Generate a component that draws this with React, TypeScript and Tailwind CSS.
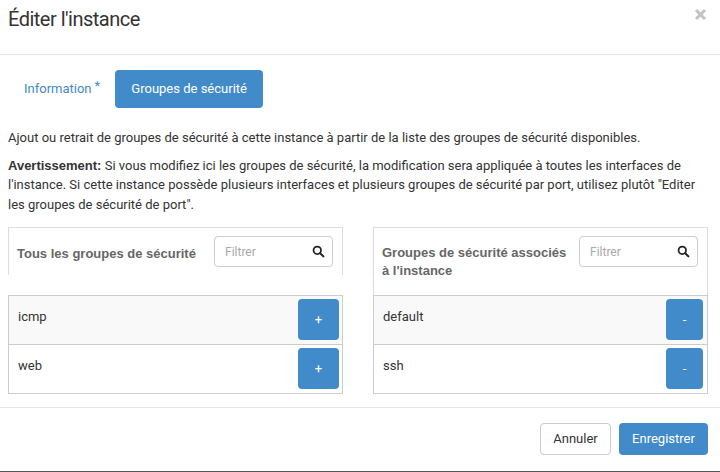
import React from "react";

const F = { fontFamily: "Roboto, 'Liberation Sans', sans-serif" };
const B = { fontFamily: "'Liberation Sans', Arial, sans-serif" };

function SearchIcon() {
  return (
    <svg width="13" height="13" viewBox="0 0 16 16" fill="none">
      <circle cx="6.5" cy="6.5" r="4.6" stroke="#222" strokeWidth="2.2" />
      <line x1="10" y1="10" x2="14" y2="14" stroke="#222" strokeWidth="2.6" strokeLinecap="round" />
    </svg>
  );
}

function Filter() {
  return (
    <div className="flex h-[31px] w-[119px] shrink-0 items-center justify-between rounded-[4px] border border-[#cccccc] pl-[10px] pr-[7px]">
      <span className="text-[12px] text-[#a9a9a9]">Filtrer</span>
      <SearchIcon />
    </div>
  );
}

function Row({ name, sign, striped, wide }: { name: string; sign: string; striped?: boolean; wide?: boolean }) {
  return (
    <div className={`flex h-[48px] items-start justify-between ${striped ? "bg-[#f9f9f9]" : "bg-white"}`}>
      <span className="pl-[9px] pt-[11px] text-[13px] text-[#333]">{name}</span>
      <div
        className={`${wide ? "mr-[3px] w-[41px]" : "mr-[4px] w-[37px]"} mt-[3px] flex h-[41px] items-center justify-center rounded-[4px] bg-[#428bca] text-[13px] text-white`}
      >
        {sign}
      </div>
    </div>
  );
}

export default function App() {
  return (
    <div className="relative h-[472px] w-[720px] overflow-hidden bg-white text-[#333]" style={F}>
      <div className="flex h-[55px] items-start justify-between border-b border-[#e5e5e5] pl-[8px] pr-[13px]">
        <h1 className="pt-[5px] text-[20px] leading-[28px] tracking-[-0.5px] text-[#333]">Éditer l'instance</h1>
        <svg className="mt-[8px]" width="13" height="13" viewBox="0 0 13 13">
          <line x1="2" y1="2" x2="11" y2="11" stroke="#c2c2c2" strokeWidth="3" />
          <line x1="11" y1="2" x2="2" y2="11" stroke="#c2c2c2" strokeWidth="3" />
        </svg>
      </div>

      <div className="px-[8px]">
        <div className="mt-[15px] flex h-[38px] items-center">
          <div className="flex h-full items-center pl-[16px] pr-[15px] text-[13px] text-[#428bca]">
            Information<span className="ml-[3px] -mt-[6px] text-[13px]">*</span>
          </div>
          <div className="flex h-full w-[148px] items-center justify-center rounded-[4px] bg-[#428bca] text-[13px] text-white">
            Groupes de sécurité
          </div>
        </div>

        <p className="mt-[20px] text-[13px] leading-[19.5px]">
          Ajout ou retrait de groupes de sécurité à cette instance à partir de la liste des groupes de sécurité disponibles.
        </p>
        <p className="mt-[8px] text-[13px] leading-[19.5px]">
          <b className="font-bold" style={B}>Avertissement:</b> Si vous modifiez ici les groupes de sécurité, la modification sera appliquée à toutes les interfaces de l'instance. Si cette instance possède plusieurs interfaces et plusieurs groupes de sécurité par port, utilisez plutôt "Editer les groupes de sécurité de port".
        </p>

        <div className="mt-[13px] flex w-[700px] gap-[30px]">
          <div className="w-[335px]">
            <div className="flex h-[48px] items-start justify-between border-x border-t border-[#dddddd] pl-[8px] pr-[9px] pt-[8px]">
              <span className="pt-[9px] text-[13px] font-bold leading-[18px] text-[#666]" style={B}>
                Tous les groupes de sécurité
              </span>
              <Filter />
            </div>
            <div className="mt-[20px] border border-[#cccccc]">
              <Row name="icmp" sign="+" striped wide />
              <div className="border-t border-[#cccccc]">
                <Row name="web" sign="+" wide />
              </div>
            </div>
          </div>
          <div className="w-[335px]">
            <div className="flex h-[68px] items-start justify-between border-x border-t border-[#dddddd] pl-[8px] pr-[9px] pt-[8px]">
              <span className="w-[190px] pt-[8px] text-[13px] font-bold leading-[18px] text-[#666]" style={B}>
                Groupes de sécurité associés à l'instance
              </span>
              <Filter />
            </div>
            <div className="border border-[#cccccc]">
              <Row name="default" sign="-" striped />
              <div className="border-t border-[#cccccc]">
                <Row name="ssh" sign="-" />
              </div>
            </div>
          </div>
        </div>
      </div>

      <div className="absolute left-0 right-0 top-[407px] flex h-[64px] items-start justify-end gap-[8px] border-t border-[#e5e5e5] pr-[12px] pt-[15px]">
        <div className="flex h-[32px] w-[71px] items-center justify-center rounded-[4px] border border-[#cccccc] text-[13px] text-[#333]">
          Annuler
        </div>
        <div className="flex h-[32px] w-[89px] items-center justify-center rounded-[4px] bg-[#428bca] text-[13px] text-white">
          Enregistrer
        </div>
      </div>
      <div className="absolute bottom-0 left-0 right-0 h-[1px] bg-[#555]" />
    </div>
  );
}
